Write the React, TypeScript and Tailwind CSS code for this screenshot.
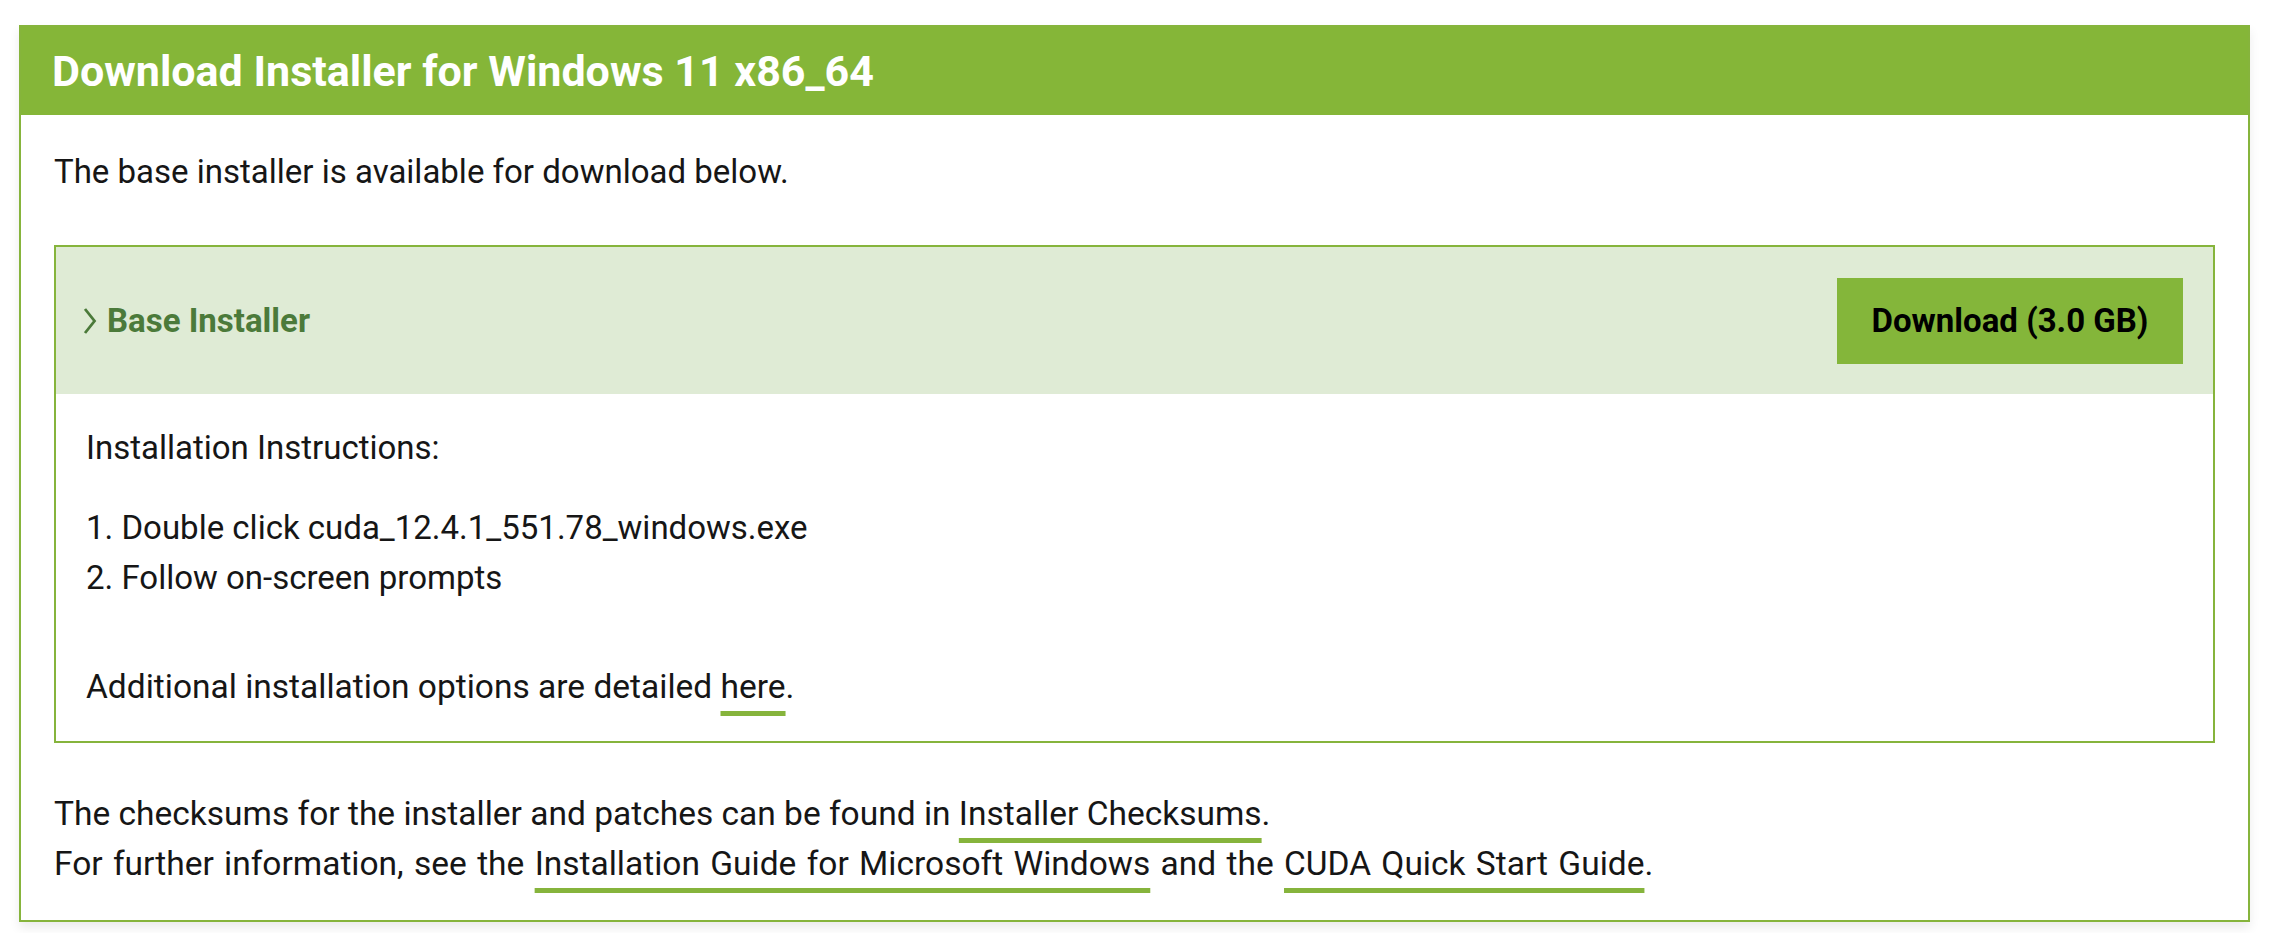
import React from "react";

const Link = ({ children }: { children: React.ReactNode }) => (
  <span className="underline decoration-[#86b43c] decoration-[5px] underline-offset-[13px]">{children}</span>
);

export default function App() {
  return (
    <div
      className="w-[2288px] h-[933px] bg-white pt-[25px] pl-[19px] text-[#161616]"
      style={{ fontFamily: "Roboto, 'Liberation Sans', sans-serif" }}
    >
      <div className="w-[2231px] border-2 border-[#86b43c] bg-white shadow-[0_6px_10px_rgba(0,0,0,0.08)]">
        <div className="h-[88px] bg-[#85b638] px-[31px] flex items-center">
          <h1 className="text-white font-bold text-[43px] leading-none">Download Installer for Windows 11 x86_64</h1>
        </div>
        <div className="px-[33px] pt-[32px] pb-[31px] text-[33px] leading-[50px]">
          <p>The base installer is available for download below.</p>
          <div className="mt-[48px] border-2 border-[#86b43c]">
            <div className="h-[147px] bg-[#dfebd5] flex items-center justify-between pl-[26px] pr-[30px]">
              <div className="flex items-center gap-[9px] text-[#4b7a3a] font-bold text-[33px]">
                <svg width="16" height="30" viewBox="0 0 16 30" fill="none">
                  <polyline points="3,3 12.5,15 3,27" stroke="#4b7a3a" strokeWidth="2.8" strokeLinejoin="miter" />
                </svg>
                <span>Base Installer</span>
              </div>
              <div className="w-[346px] h-[86px] bg-[#84b63a] flex items-center justify-center text-black font-bold text-[33px]">
                Download (3.0 GB)
              </div>
            </div>
            <div className="pl-[30px] pt-[29px] pb-[29px]">
              <p>Installation Instructions:</p>
              <ol className="mt-[30px]">
                <li>1. Double click cuda_12.4.1_551.78_windows.exe</li>
                <li>2. Follow on-screen prompts</li>
              </ol>
              <p className="mt-[59px] text-[33.5px]">
                Additional installation options are detailed <Link>here</Link>.
              </p>
            </div>
          </div>
          <div className="mt-[46px] text-[33.5px]">
            <p>
              The checksums for the installer and patches can be found in <Link>Installer Checksums</Link>.
            </p>
            <p className="[word-spacing:2px]">
              For further information, see the <Link>Installation Guide for Microsoft Windows</Link> and the{" "}
              <Link>CUDA Quick Start Guide</Link>.
            </p>
          </div>
        </div>
      </div>
    </div>
  );
}
